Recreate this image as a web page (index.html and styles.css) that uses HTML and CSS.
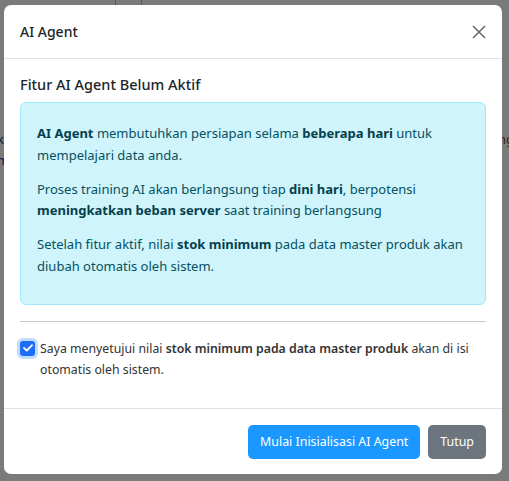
FILE: index.html
```html
<!DOCTYPE html>
<html>
<head>
<link rel="stylesheet" href="styles.css">
</head>
<body>

<div class="page-behind">
  <div class="behind-cols">
    <div class="behind-col"></div>
    <div class="behind-col"></div>
  </div>
  <div class="behind-text behind-left">k<br>m</div>
  <div class="behind-text behind-right">ng</div>
</div>

<div class="modal-backdrop"></div>

<div class="modal-dialog">
  <div class="modal-content">
    <div class="modal-header">
      <h5 class="modal-title">AI Agent</h5>
      <button class="btn-close" type="button" aria-label="Close">
        <svg width="14" height="14" viewBox="0 0 14 14">
          <path d="M1 1 L13 13 M13 1 L1 13" stroke="#6c6c6c" stroke-width="1.6" fill="none"/>
        </svg>
      </button>
    </div>

    <div class="modal-body">
      <h6 class="section-title">Fitur AI Agent Belum Aktif</h6>

      <div class="alert-info">
        <p><b>AI Agent</b> membutuhkan persiapan selama <b>beberapa hari</b> untuk mempelajari data anda.</p>
        <p>Proses training AI akan berlangsung tiap <b>dini hari</b>, berpotensi <b>meningkatkan beban server</b> saat training berlangsung</p>
        <p>Setelah fitur aktif, nilai <b>stok minimum</b> pada data master produk akan diubah otomatis oleh sistem.</p>
      </div>

      <hr class="divider">

      <label class="form-check">
        <span class="check-box">
          <svg width="10" height="8" viewBox="0 0 10 8">
            <path d="M1 4 L3.8 6.6 L9 1.2" stroke="#fff" stroke-width="1.8" fill="none" stroke-linecap="round" stroke-linejoin="round"/>
          </svg>
        </span>
        <span class="check-label">Saya menyetujui nilai <b>stok minimum pada data master produk</b> akan di isi otomatis oleh sistem.</span>
      </label>
    </div>

    <div class="modal-footer">
      <button class="btn btn-primary" type="button">Mulai Inisialisasi AI Agent</button>
      <button class="btn btn-secondary" type="button">Tutup</button>
    </div>
  </div>
</div>

</body>
</html>
```

FILE: styles.css
```css
html, body {
  margin: 0;
  padding: 0;
  height: 100%;
}

body {
  font-family: "Noto Sans", "Open Sans", Arial, sans-serif;
  font-size: 13px;
  color: #212529;
  background-color: #fff;
  overflow: hidden;
}

.page-behind {
  position: absolute;
  inset: 0;
}

.behind-cols {
  display: flex;
  margin-left: 115px;
  height: 40px;
}

.behind-col {
  width: 25px;
  border-left: 1px solid #bbb;
}

.behind-text {
  position: absolute;
  font-size: 13px;
  line-height: 21px;
  color: #0b3b8c;
}

.behind-left {
  left: -3px;
  top: 129px;
}

.behind-right {
  left: 498px;
  top: 129px;
  color: #7a4a1a;
}

.modal-backdrop {
  position: absolute;
  inset: 0;
  background-color: rgba(0, 0, 0, 0.52);
}

.modal-dialog {
  position: absolute;
  left: 4px;
  top: 5px;
  width: 498px;
}

.modal-content {
  background-color: #fff;
  border-radius: 7px;
  overflow: hidden;
}

.modal-header {
  display: flex;
  align-items: center;
  justify-content: space-between;
  height: 53px;
  padding: 0 16px;
  border-bottom: 1px solid #dee2e6;
}

.modal-title {
  margin: 0;
  font-size: 14px;
  font-weight: 500;
  color: #212529;
}

.btn-close {
  border: 0;
  background: none;
  padding: 0;
  width: 14px;
  height: 14px;
  display: flex;
  cursor: pointer;
}

.modal-body {
  padding: 16px 16px 28px;
}

.section-title {
  margin: 0 0 8px;
  font-size: 14.5px;
  font-weight: 500;
  line-height: 19px;
  color: #212529;
}

.alert-info {
  background-color: #cff4fc;
  border: 1px solid #9eeaf9;
  border-radius: 6px;
  color: #055160;
  padding: 20px 16px 14px;
  line-height: 21.5px;
}

.alert-info p {
  margin: 0 0 12.5px;
}

.alert-info b {
  color: #04414d;
}

.divider {
  margin: 16px 0;
  border: 0;
  border-top: 1px solid #c8c8c8;
}

.form-check {
  display: flex;
  align-items: flex-start;
  font-size: 12.3px;
  line-height: 21px;
  color: #333;
}

.form-check b {
  font-weight: 600;
}

.check-box {
  flex: none;
  width: 15px;
  height: 15px;
  margin: 3px 5px 0 0;
  border-radius: 3px;
  background-color: #1e6ef5;
  box-shadow: 0 0 0 3px rgba(13, 110, 253, 0.25);
  display: flex;
  align-items: center;
  justify-content: center;
}

.modal-footer {
  display: flex;
  justify-content: flex-end;
  gap: 8px;
  padding: 16px 16px 15px;
  border-top: 1px solid #dee2e6;
}

.btn {
  height: 34px;
  padding: 0 12px;
  border: 0;
  border-radius: 5px;
  font-family: inherit;
  font-size: 12.4px;
  color: #fff;
  cursor: pointer;
}

.btn-primary {
  background-color: #1a98ff;
}

.btn-secondary {
  background-color: #6c757d;
}
```
